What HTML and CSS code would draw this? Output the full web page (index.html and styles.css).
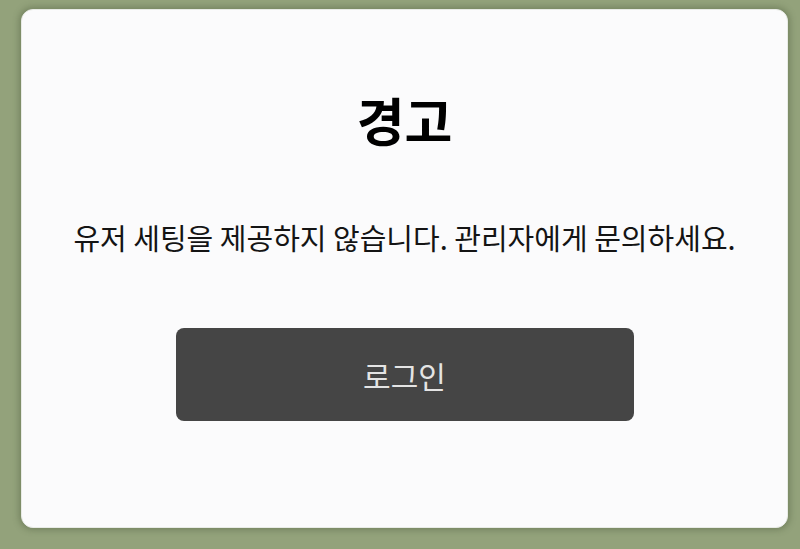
FILE: index.html
```html
<!DOCTYPE html>
<html>
<head>
<meta charset="utf-8">
<link rel="stylesheet" href="styles.css">
</head>
<body>
<div class="dialog-wrap">
  <div class="dialog">
    <div class="dialog_title">경고</div>
    <div class="dialog_message">유저 세팅을 제공하지 않습니다. 관리자에게 문의하세요.</div>
    <div class="dialog_actions">
      <a href="#" class="dialog_button">로그인</a>
    </div>
  </div>
</div>
</body>
</html>
```

FILE: styles.css
```css
html, body {
  margin: 0;
  height: 100%;
}

body {
  background-color: #93a27b;
  font-family: "Noto Sans CJK KR", "Noto Sans", sans-serif;
  color: #111;
}

.dialog-wrap {
  box-sizing: border-box;
  height: 100%;
  padding: 9px 12px 21px 21px;
}

.dialog {
  box-sizing: border-box;
  height: 100%;
  background-color: #fbfbfc;
  border: 1px solid #e8ebe6;
  border-radius: 12px;
  box-shadow: 0 0 6px 2px rgba(60, 75, 45, 0.35);

  display: flex;
  flex-direction: column;
  align-items: center;
}

.dialog_title {
  margin-top: 78px;
  font-size: 52px;
  font-weight: bold;
  line-height: 64px;
  color: #000;
}

.dialog_message {
  margin-top: 65px;
  font-size: 29px;
  line-height: 40px;
  color: #141414;
}

.dialog_actions {
  margin-top: 71px;
}

.dialog_button {
  display: flex;
  align-items: center;
  justify-content: center;
  width: 458px;
  height: 93px;
  background-color: #454545;
  border-radius: 8px;

  text-decoration: none;
  font-size: 30px;
  color: #e4e4e4;
}
```
